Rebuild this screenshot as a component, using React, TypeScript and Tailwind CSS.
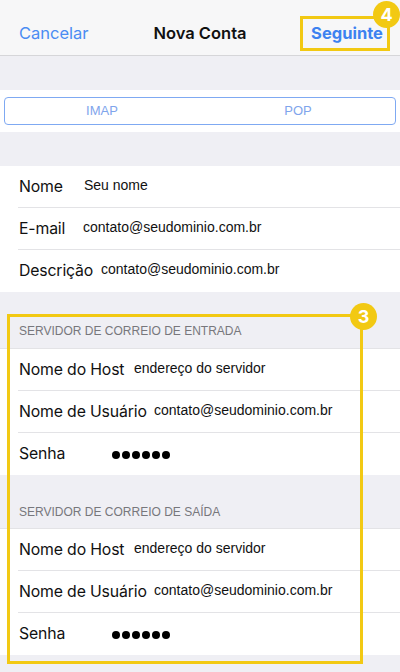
import React from "react";

const label = "text-[15.8px] text-[#111] font-['Inter',sans-serif] tracking-[-0.15px]";
const value = "text-[14px] text-[#111] font-['Liberation_Sans',Arial,sans-serif] -mt-[3px]";

function Row({ l, v, vx, last, dots }: { l: string; v: string; vx: number; last?: boolean; dots?: boolean }) {
  return (
    <div className="pl-[18px]">
      <div className={`h-[42px] flex items-center ${last ? "" : "border-b border-[#e3e3e6]"}`}>
        <div style={{ width: vx - 18 }} className={`${label} pl-px shrink-0`}>{l}</div>
        {dots ? (
          <div className="flex gap-[2px] pt-[2px]">
            {[0, 1, 2, 3, 4, 5].map((i) => (
              <span key={i} className="w-[8px] h-[8px] rounded-full bg-black inline-block" />
            ))}
          </div>
        ) : (
          <div className={value}>{v}</div>
        )}
      </div>
    </div>
  );
}

export default function App() {
  return (
    <div className="w-[400px] h-[672px] bg-[#efeff4] relative overflow-hidden font-['Inter',sans-serif]">
      {/* nav */}
      <div className="h-[56px] bg-[#f7f7f8] border-b border-[#d6d6d9] flex items-center justify-between pl-[19px] pr-[10px] relative">
        <span className="text-[16.5px] text-[#4a8cf3] pt-[12px]">Cancelar</span>
        <span className="absolute left-0 right-0 text-center text-[16.5px] font-semibold text-[#111] pt-[12px] pointer-events-none">Nova Conta</span>
        <div className="relative mt-[12px]">
          <div className="border-[3px] border-[#f2c913] h-[35px] w-[90px] flex items-center justify-center pl-[4px]">
            <span className="text-[16.5px] font-bold text-[#3d82f0]">Seguinte</span>
          </div>
          <div className="absolute -top-[15px] -right-[10px] w-[27px] h-[27px] rounded-full bg-[#f2c913] flex items-center justify-center text-white font-bold text-[18px]">4</div>
        </div>
      </div>

      <div className="h-[34px]" />

      {/* segmented */}
      <div className="h-[42px] bg-white pt-[7px] px-[4px]">
        <div className="h-[28px] border border-[#7fa9f2] rounded-[4px] flex text-[13px] text-[#7fa5ec] font-['Liberation_Sans',Arial,sans-serif]">
          <div className="flex-1 flex items-center justify-center pr-[2px]">IMAP</div>
          <div className="flex-1 flex items-center justify-center">POP</div>
        </div>
      </div>

      <div className="h-[34px]" />

      <div className="bg-white">
        <Row l="Nome" v="Seu nome" vx={84} />
        <Row l="E-mail" v="contato@seudominio.com.br" vx={83} />
        <Row l="Descrição" v="contato@seudominio.com.br" vx={101} last />
      </div>

      <div className="h-[56px] flex items-end pb-[8px] pl-[19px] text-[12px] text-[#77777c] font-['Liberation_Sans',Arial,sans-serif]">
        SERVIDOR DE CORREIO DE ENTRADA
      </div>
      <div className="bg-white border-t border-[#e3e3e6]">
        <Row l="Nome do Host" v="endereço do servidor" vx={134} />
        <Row l="Nome de Usuário" v="contato@seudominio.com.br" vx={154} />
        <Row l="Senha" v="" vx={112} dots last />
      </div>

      <div className="h-[53px] flex items-end pb-[7px] pl-[19px] text-[12px] text-[#77777c] font-['Liberation_Sans',Arial,sans-serif]">
        SERVIDOR DE CORREIO DE SAÍDA
      </div>
      <div className="bg-white border-t border-[#e3e3e6]">
        <Row l="Nome do Host" v="endereço do servidor" vx={134} />
        <Row l="Nome de Usuário" v="contato@seudominio.com.br" vx={154} />
        <Row l="Senha" v="" vx={112} dots last />
      </div>

      {/* highlight box 3 */}
      <div className="absolute left-[7px] top-[314px] w-[356px] h-[350px] border-[3px] border-[#f2c913] pointer-events-none" />
      <div className="absolute left-[350px] top-[303px] w-[27px] h-[27px] rounded-full bg-[#f2c913] flex items-center justify-center text-white font-bold text-[18px]">3</div>
    </div>
  );
}
